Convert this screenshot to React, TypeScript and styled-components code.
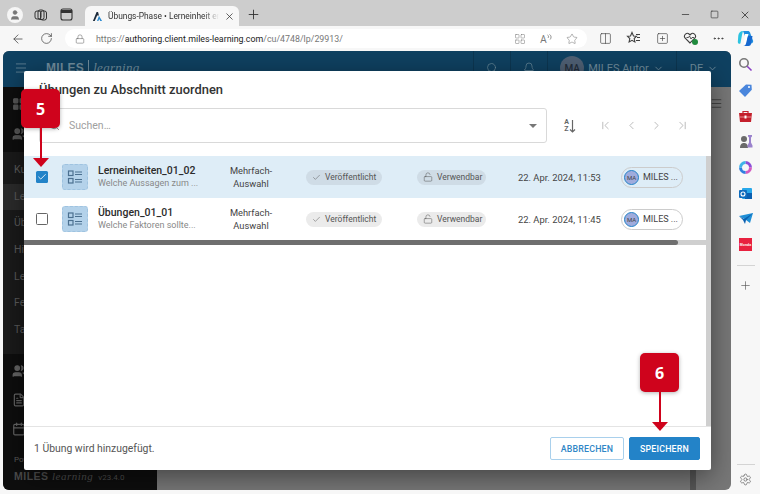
import styled, { createGlobalStyle } from 'styled-components'
import {
  ArrowLeft, RotateCw, Lock, Plus, X, Minus, Square, MoreHorizontal, Settings, Search, Star,
  Check, LockOpen, ChevronFirst, ChevronLeft, ChevronRight, ChevronLast, ChevronDown, Menu,
  Bell, LayoutGrid, Columns2, SquarePlus, User, Users, FileText, Calendar,
} from 'lucide-react'

const GlobalStyle = createGlobalStyle`
  html, body { margin: 0; width: 760px; height: 494px; overflow: hidden; background: #f7f7f7; }
  * { box-sizing: border-box; }
  body { font-family: Roboto, "Liberation Sans", sans-serif; }
`

const Shell = styled.div`
  position: relative;
  width: 760px;
  height: 494px;
  display: flex;
  flex-direction: column;
  overflow: hidden;
  background: #f7f7f7;
`

/* browser chrome */
const TabStrip = styled.div`
  height: 26px;
  flex: none;
  display: flex;
  align-items: flex-end;
  background: #cdcdcd;
  color: #2e2e2e;
`
const StripIcon = styled.div<{ $w: number }>`
  width: ${p => p.$w}px;
  height: 26px;
  padding-top: 3px;
  display: flex;
  align-items: center;
  justify-content: center;
  flex: none;
`
const Profile = styled.div`
  width: 16px;
  height: 16px;
  border-radius: 50%;
  background: #f5f5f5;
  color: #777;
  display: flex;
  align-items: center;
  justify-content: center;
`
const Tab = styled.div`
  width: 154px;
  height: 20px;
  flex: none;
  margin-left: 4px;
  padding: 0 4px 0 7px;
  display: flex;
  align-items: center;
  gap: 5px;
  background: #f7f7f7;
  border-radius: 6px 6px 0 0;
  svg { flex: none; }
`
const TabTitle = styled.span`
  flex: 1;
  min-width: 0;
  font: 8.4px Roboto, sans-serif;
  color: #333;
  white-space: nowrap;
  -webkit-mask-image: linear-gradient(to right, #000 86%, transparent);
  mask-image: linear-gradient(to right, #000 86%, transparent);
`
const StripSpacer = styled.div`
  flex: 1;
`
const Toolbar = styled.div`
  height: 25px;
  flex: none;
  display: flex;
  align-items: center;
  padding-left: 8px;
  color: #444;
`
const NavButton = styled.div<{ $w: number }>`
  width: ${p => p.$w}px;
  flex: none;
  display: flex;
  align-items: center;
  justify-content: center;
  position: relative;
  color: #404040;
`
const AddressBar = styled.div`
  width: 522px;
  height: 19px;
  flex: none;
  margin-right: 4px;
  border-radius: 10px;
  background: #fff;
  display: flex;
  align-items: center;
  padding: 0 2px 0 10px;
  color: #666;
`
const Url = styled.div`
  flex: 1;
  margin-left: 11px;
  font: 8.85px Roboto, sans-serif;
  color: #777;
  white-space: nowrap;
  b { font-weight: 400; color: #222; }
`
const AddressIcon = styled.div`
  width: 26px;
  flex: none;
  display: flex;
  align-items: center;
  justify-content: center;
  color: #777;
  font: 10px "Open Sans", sans-serif;
`

/* body of the window */
const Body = styled.div`
  flex: 1;
  display: flex;
  padding: 0 0 4px 3px;
  min-height: 0;
`
const Page = styled.div`
  width: 728px;
  flex: none;
  display: flex;
  flex-direction: column;
  border-radius: 6px;
  overflow: hidden;
  background: #777;
`
const AppHeader = styled.div`
  height: 36px;
  flex: none;
  display: flex;
  align-items: center;
  padding: 0 0 2px 11px;
  background: #0f4161;
  color: #6f8c9c;
  font-size: 11px;
`
const Logo = styled.div`
  margin-left: 18px;
  display: flex;
  align-items: center;
  gap: 4px;
  flex: 1;
  font: 700 12px "Liberation Sans", sans-serif;
  letter-spacing: .3px;
  i { font: italic 400 13px "Liberation Serif", serif; border-left: 1px solid #6f8c9c; padding-left: 4px; }
`
const HeaderCell = styled.div<{ $w: number }>`
  width: ${p => p.$w}px;
  height: 36px;
  display: flex;
  align-items: center;
  justify-content: center;
  gap: 4px;
  flex: none;
  border-left: 1px solid #0c3651;
  white-space: nowrap;
`
const Avatar = styled.div`
  width: 24px;
  height: 24px;
  border-radius: 50%;
  background: #4f6074;
  color: #222d3a;
  font-size: 10px;
  font-weight: 500;
  display: flex;
  align-items: center;
  justify-content: center;
`
const Main = styled.div`
  flex: 1;
  display: flex;
  min-height: 0;
  position: relative;
`
const Sidebar = styled.div`
  width: 154px;
  flex: none;
  display: flex;
  flex-direction: column;
  background: #0e0e0e;
  color: #5c5c5c;
  font-size: 10.5px;
  white-space: nowrap;
`
const SideIcons = styled.div<{ $gap: number; $bottom: number }>`
  display: flex;
  flex-direction: column;
  gap: ${p => p.$gap}px;
  padding: 10px 0 ${p => p.$bottom}px 9px;
`
const SideMenu = styled.div`
  height: 202px;
  padding-top: 5px;
  background: #1a1a1a;
  flex: none;
`
const SideItem = styled.div<{ $active?: boolean }>`
  height: 26.7px;
  line-height: 26.7px;
  padding-left: 11px;
  background: ${p => (p.$active ? '#2b2b2b' : 'transparent')};
`
const SideFooter = styled.div`
  margin-top: auto;
  padding: 0 0 8px 11px;
  font-size: 8px;
`
const SideBrand = styled.div`
  margin-top: 6px;
  font: 700 10.5px "Liberation Sans", sans-serif;
  letter-spacing: .5px;
  color: #4d4d4d;
  i { font: italic 400 11px "Liberation Serif", serif; }
  span { font: 400 8px Roboto, sans-serif; margin-left: 5px; letter-spacing: 0; }
`
const Content = styled.div`
  flex: 1;
  display: flex;
  justify-content: flex-end;
  padding: 10px 8px 0 0;
  color: #333;
`
const BackScroll = styled.div`
  position: absolute;
  right: 35px;
  bottom: 0;
  width: 6px;
  height: 20px;
  background: #565656;
`
const Rail = styled.div`
  flex: 1;
  display: flex;
  flex-direction: column;
  align-items: center;
  padding-top: 1px;
  color: #555;
`
const RailIcon = styled.div`
  height: 25.7px;
  flex: none;
  display: flex;
  align-items: center;
  justify-content: center;
`
const RailRule = styled.div<{ $top: number; $bottom: number }>`
  width: 18px;
  height: 1px;
  flex: none;
  background: #d4d4d4;
  margin: ${p => p.$top}px 0 ${p => p.$bottom}px;
`
const RedTile = styled.div`
  width: 13px;
  height: 13px;
  background: #e8213f;
  color: #fff;
  font: 700 3.5px "Liberation Sans", sans-serif;
  display: flex;
  align-items: center;
  justify-content: center;
`

/* dialog */
const Modal = styled.div`
  position: absolute;
  left: 21px;
  top: -16px;
  width: 687px;
  height: 399px;
  background: #fff;
  border-radius: 2px;
  box-shadow: 0 6px 26px rgba(0, 0, 0, .45);
  display: flex;
  flex-direction: column;
`
const ModalTitle = styled.div`
  height: 37px;
  flex: none;
  padding: 0 0 0 15px;
  display: flex;
  align-items: center;
  font-size: 12.9px;
  font-weight: 500;
  color: #333;
`
const FilterRow = styled.div`
  height: 48px;
  flex: none;
  display: flex;
  padding-left: 15px;
`
const SearchBox = styled.div`
  width: 508px;
  height: 35px;
  border: 1px solid #d9d9d9;
  border-radius: 3px;
  display: flex;
  align-items: center;
  padding: 0 9px 0 9px;
  color: #888;
  font-size: 10.5px;
  span { flex: 1; margin-left: 9px; color: #a0a0a0; }
`
const Caret = styled.div`
  width: 0;
  height: 0;
  border-left: 4px solid transparent;
  border-right: 4px solid transparent;
  border-top: 4px solid #777;
`
const SortIcon = styled.div`
  width: 46px;
  height: 35px;
  flex: none;
  display: flex;
  align-items: center;
  justify-content: center;
  color: #666;
`
const SortLetters = styled.div`
  display: flex;
  flex-direction: column;
  font-size: 7px;
  font-weight: 700;
  line-height: 7px;
`
const Pager = styled.div`
  height: 35px;
  display: flex;
  align-items: center;
  color: #a8a8a8;
`
const PagerIcon = styled.div`
  width: 25.6px;
  display: flex;
  justify-content: center;
`
const ListArea = styled.div`
  flex: 1;
  display: flex;
  min-height: 0;
`
const ListColumn = styled.div`
  width: 682px;
  flex: none;
`
const VScroll = styled.div`
  width: 5px;
  flex: none;
  background: #cfcfcf;
`
const Row = styled.div<{ $selected?: boolean }>`
  height: 42px;
  display: grid;
  grid-template-columns: 38px 36px 118px 70px 131px 101px 103px 85px;
  align-items: center;
  background: ${p => (p.$selected ? '#deedf7' : '#fff')};
`
const CheckBox = styled.div<{ $checked?: boolean }>`
  width: 12px;
  height: 12px;
  margin-left: 11.5px;
  border-radius: 1.5px;
  border: ${p => (p.$checked ? 'none' : '1.5px solid #666')};
  background: ${p => (p.$checked ? '#2383c8' : '#fff')};
  color: #fff;
  display: flex;
  align-items: center;
  justify-content: center;
`
const TypeTile = styled.div`
  width: 26px;
  height: 26px;
  border-radius: 3px;
  background: #b4d2ea;
  border: 1px dashed #9fc3e0;
  color: #4b7090;
  display: flex;
  align-items: center;
  justify-content: center;
`
const NameCell = styled.div`
  min-width: 0;
  white-space: nowrap;
`
const ItemName = styled.div`
  font-size: 10.5px;
  font-weight: 500;
  line-height: 13px;
  color: #2c2c2c;
`
const ItemText = styled.div`
  font-size: 9px;
  line-height: 13px;
  color: #888;
`
const TypeCell = styled.div`
  font-size: 9.3px;
  line-height: 13px;
  text-align: center;
  color: #444;
`
const Chip = styled.div<{ $selected?: boolean; $w: number }>`
  width: ${p => p.$w}px;
  height: 15px;
  border-radius: 8px;
  background: ${p => (p.$selected ? '#cfdce6' : '#ebebeb')};
  color: #555;
  font-size: 8.5px;
  display: flex;
  align-items: center;
  gap: 4px;
  padding-left: 6px;
  white-space: nowrap;
`
const StatusCell = styled.div`
  padding-left: 20px;
`
const DateCell = styled.div`
  font-size: 9.4px;
  color: #444;
  white-space: nowrap;
`
const UserChip = styled.div`
  width: 62px;
  height: 21px;
  border: 1px solid #ccc;
  border-radius: 11px;
  display: flex;
  align-items: center;
  gap: 4px;
  padding-left: 2px;
  font-size: 9px;
  color: #444;
  white-space: nowrap;
`
const UserDot = styled.div`
  width: 15px;
  height: 15px;
  border-radius: 50%;
  background: #9fabdc;
  border: 1.5px solid #2383c8;
  color: #444;
  font-size: 6px;
  display: flex;
  align-items: center;
  justify-content: center;
`
const HTrack = styled.div`
  height: 5px;
  background: #cfcfcf;
`
const HThumb = styled.div`
  width: 654px;
  height: 5px;
  border-radius: 0 3px 3px 0;
  background: #6f6f6f;
`
const ModalFooter = styled.div`
  height: 44px;
  flex: none;
  border-top: 1px solid #e4e4e4;
  display: flex;
  align-items: center;
  gap: 5px;
  padding: 0 11px 0 10px;
`
const FooterText = styled.div`
  flex: 1;
  font-size: 10.4px;
  color: #555;
`
const Button = styled.button<{ $primary?: boolean }>`
  height: 23px;
  padding: 0;
  width: ${p => (p.$primary ? 71 : 74)}px;
  border-radius: 2px;
  border: 1px solid ${p => (p.$primary ? '#2383c8' : '#a9d0ec')};
  background: ${p => (p.$primary ? '#2383c8' : '#fff')};
  color: ${p => (p.$primary ? '#fff' : '#2f86c6')};
  font: 500 8.8px Roboto, sans-serif;
  letter-spacing: .2px;
`

/* numbered callouts of the manual */
const Callout = styled.div<{ $x: number; $y: number }>`
  position: absolute;
  left: ${p => p.$x}px;
  top: ${p => p.$y}px;
  width: 39px;
  display: flex;
  flex-direction: column;
  align-items: center;
`
const CalloutBadge = styled.div`
  width: 39px;
  height: 39px;
  border-radius: 5px;
  background: #cf031c;
  color: #fff;
  font: 700 16px "Open Sans", sans-serif;
  box-shadow: 0 1px 4px rgba(0, 0, 0, .3);
  display: flex;
  align-items: center;
  justify-content: center;
`
const CalloutLine = styled.div`
  width: 2px;
  height: 30px;
  background: #cf031c;
`
const CalloutHead = styled.div`
  width: 0;
  height: 0;
  border-left: 8.5px solid transparent;
  border-right: 8.5px solid transparent;
  border-top: 9px solid #cf031c;
`

const TypeIcon = () => (
  <svg width="16" height="16" viewBox="0 0 16 16" fill="none" stroke="currentColor" strokeWidth="1.2">
    <rect x="1.5" y="2" width="4.5" height="4.5" />
    <rect x="1.5" y="9.5" width="4.5" height="4.5" />
    <path d="M8 3h7M8 5.5h7M8 10.5h7M8 13h7" />
  </svg>
)

const FavIcon = () => (
  <svg width="11" height="11" viewBox="0 0 12 12">
    <path d="M1 11 5 1h1.6l1 4-2 0L3 11z" fill="#1b2a3a" />
    <path d="M5.5 11 7.6 5.2 11 11H9L7.8 8.6 7 11z" fill="#2b8ad0" />
  </svg>
)

const Copilot = () => (
  <svg width="17" height="17" viewBox="0 0 17 17">
    <path d="M6 1h5c1 0 1.6.6 2 1.6l3 8c.5 1.6-.5 3-2 3h-3z" fill="#1f8fe0" />
    <path d="M1.3 5.5C1.6 3 3.5 1 6 1l-1 4-1.500 8c-.3 1.500-2.500 1-2.700-1z" fill="#2cc3e0" />
    <path d="M8 4h3.500l-2.500 9.500c-.4 1.800-1.500 2.500-3 2.500H4.500c2 0 2.300-1.500 2.500-2.500z" fill="#fff" />
    <path d="M11 6h4.500L14 14c-.3 1-1 2-2.500 2H6c2 0 2.600-1 3-2.500z" fill="#1668cf" />
  </svg>
)

const FavoritesIcon = () => (
  <svg width="15" height="15" viewBox="0 0 15 15" fill="none" stroke="#404040" strokeWidth="1.1">
    <path d="M6 1.500 7.500 5l3 .3-2.300 2.200.7 3.500L6 9.300 3.100 11l.7-3.500L1.500 5.300l3-.3z" />
    <path d="M10 3.500h4M11 6.500h3M10 9.500h4" />
  </svg>
)

const HeartPulse = () => (
  <svg width="16" height="15" viewBox="0 0 16 15" fill="none">
    <path d="M7 12 2 7c-2-3 2-6 4-4l1 1 1-1c2-2 6 1 4 4z" stroke="#404040" strokeWidth="1.100" />
    <path d="M3.500 6.500h2l1-1.500 1.500 3 1-1.500h2" stroke="#404040" strokeWidth=".9" />
    <circle cx="12" cy="11" r="3" fill="#1f8a3d" />
  </svg>
)

const ReadAloudWaves = () => (
  <svg width="5" height="9" viewBox="0 0 5 9" fill="none" stroke="#777" strokeWidth=".8">
    <path d="M.5 1c1.300.6 1.300 2 .5 3M2.500.5c2 1 2 3.500.6 5" />
  </svg>
)

const WorkspaceIcon = () => (
  <svg width="14" height="14" viewBox="0 0 14 14" fill="none" stroke="#333" strokeWidth="1">
    <rect x="1" y="3" width="6" height="8" rx="2" />
    <rect x="4" y="2" width="6" height="9.500" rx="2" />
    <rect x="6.500" y="3" width="6" height="9" rx="2" />
  </svg>
)

const TabActionsIcon = () => (
  <svg width="13" height="13" viewBox="0 0 13 13" fill="none" stroke="#333" strokeWidth="1.100">
    <rect x="1" y="1" width="11" height="11" rx="2" />
    <path d="M1.500 2.500h10v2h-10z" fill="#333" />
  </svg>
)

const RailSearch = () => (
  <svg width="15" height="15" viewBox="0 0 15 15" fill="none" strokeWidth="1.600">
    <circle cx="6" cy="6" r="4.200" stroke="#777" />
    <path d="M9.200 9.200 13.500 13.500" stroke="#8a3fc4" />
  </svg>
)
const RailTag = () => (
  <svg width="15" height="15" viewBox="0 0 15 15">
    <path d="M1 8 8 1.500l5.500.2.300 5L7 14z" fill="#4a86dc" />
    <circle cx="11" cy="4" r="1" fill="#fff" />
  </svg>
)
const RailBox = () => (
  <svg width="15" height="15" viewBox="0 0 15 15">
    <path d="M5 4V2.500h5V4" fill="none" stroke="#c4202c" strokeWidth="1.200" />
    <path d="M1 4h13l-1 9H2z" fill="#c4202c" />
    <path d="M1.500 8h12" stroke="#f4c0c0" strokeWidth=".7" />
    <rect x="6.500" y="6.500" width="2" height="3" fill="#fff" />
  </svg>
)
const RailChess = () => (
  <svg width="16" height="15" viewBox="0 0 16 15">
    <circle cx="6" cy="5" r="3" fill="#6a6a6a" />
    <path d="M2 14c0-4 2-5 4-5s4 1 4 5z" fill="#6a6a6a" />
    <path d="M10 1h4v1.500l-1 1v5l1.500 3v2h-5v-2l1.500-3v-5l-1-1z" fill="#9a82cc" />
  </svg>
)
const RailRing = () => (
  <svg width="15" height="15" viewBox="0 0 15 15" fill="none" strokeWidth="3">
    <path d="M7.500 2.500a5 5 0 0 1 5 5" stroke="#8c4fd8" />
    <path d="M12.500 7.500a5 5 0 0 1-5 5" stroke="#d35ac0" />
    <path d="M7.500 12.500a5 5 0 0 1-5-5" stroke="#2f7ee0" />
    <path d="M2.500 7.500a5 5 0 0 1 5-5" stroke="#3fb4e8" />
  </svg>
)
const RailOutlook = () => (
  <svg width="15" height="15" viewBox="0 0 15 15">
    <rect x="4" y="2" width="10" height="11" rx="1" fill="#28a8ea" />
    <rect x="7" y="7" width="7" height="6" fill="#0a5fb0" />
    <rect x="1" y="4" width="8" height="8" rx="1" fill="#0f6cbd" />
    <circle cx="5" cy="8" r="2" fill="none" stroke="#fff" strokeWidth="1.100" />
  </svg>
)
const RailPlane = () => (
  <svg width="16" height="15" viewBox="0 0 16 15">
    <path d="M1 5 15 2l-3 10-4-3z" fill="#1f8fd6" />
    <path d="M1 5l5 3 9-6-7 7-1 4-2-4z" fill="#0a5fb0" />
  </svg>
)

type Exercise = { name: string; text: string; date: string; selected?: boolean }

const exercises: Exercise[] = [
  { name: 'Lerneinheiten_01_02', text: 'Welche Aussagen zum ...', date: '22. Apr. 2024, 11:53', selected: true },
  { name: 'Übungen_01_01', text: 'Welche Faktoren sollte...', date: '22. Apr. 2024, 11:45' },
]

const sideItems = ['Kurse', 'Lerneinheiten', 'Übungen', 'Hinweise', 'Lernziele', 'Feedback', 'Tags']

const App = () => (
  <Shell>
    <GlobalStyle />
    <TabStrip>
      <StripIcon $w={30}><Profile><User size={12} fill="#777" strokeWidth={1} /></Profile></StripIcon>
      <StripIcon $w={22}><WorkspaceIcon /></StripIcon>
      <StripIcon $w={29}><TabActionsIcon /></StripIcon>
      <Tab>
        <FavIcon />
        <TabTitle>Übungs-Phase • Lerneinheit erst</TabTitle>
        <X size={11} strokeWidth={1.6} />
      </Tab>
      <StripIcon $w={28}><Plus size={15} strokeWidth={1.4} /></StripIcon>
      <StripSpacer />
      <StripIcon $w={29}><Minus size={11} strokeWidth={1.6} /></StripIcon>
      <StripIcon $w={29}><Square size={9} strokeWidth={1.6} /></StripIcon>
      <StripIcon $w={31}><X size={12} strokeWidth={1.6} /></StripIcon>
    </TabStrip>
    <Toolbar>
      <NavButton $w={20}><ArrowLeft size={14} strokeWidth={1.3} /></NavButton>
      <NavButton $w={37}><RotateCw size={13} strokeWidth={1.3} /></NavButton>
      <AddressBar>
        <Lock size={10} strokeWidth={1.3} />
        <Url>https://<b>authoring.client.miles-learning.com</b>/cu/4748/lp/29913/</Url>
        <AddressIcon><LayoutGrid size={12} strokeWidth={1} /></AddressIcon>
        <AddressIcon>A<ReadAloudWaves /></AddressIcon>
        <AddressIcon><Star size={12} strokeWidth={1.1} /></AddressIcon>
      </AddressBar>
      <NavButton $w={28}><Columns2 size={13} strokeWidth={1.2} /></NavButton>
      <NavButton $w={29}><FavoritesIcon /></NavButton>
      <NavButton $w={28}><SquarePlus size={13} strokeWidth={1.2} /></NavButton>
      <NavButton $w={29}><HeartPulse /></NavButton>
      <NavButton $w={27}><MoreHorizontal size={13} strokeWidth={1.8} /></NavButton>
      <NavButton $w={27}><Copilot /></NavButton>
    </Toolbar>
    <Body>
      <Page>
        <AppHeader>
          <Menu size={14} strokeWidth={1.3} />
          <Logo>MILES <i>learning</i></Logo>
          <HeaderCell $w={37}><Search size={12} strokeWidth={1.4} /></HeaderCell>
          <HeaderCell $w={37}><Bell size={12} strokeWidth={1.4} /></HeaderCell>
          <HeaderCell $w={129}>
            <Avatar>MA</Avatar>MILES Autor<ChevronDown size={11} />
          </HeaderCell>
          <HeaderCell $w={55}>DE<ChevronDown size={11} /></HeaderCell>
        </AppHeader>
        <Main>
          <Sidebar>
            <SideIcons $gap={16} $bottom={11}>
              <LayoutGrid size={14} fill="#555" />
              <Users size={14} fill="#555" />
            </SideIcons>
            <SideMenu>
              {sideItems.map((item, i) => (
                <SideItem key={i} $active={i === 1}>{item}</SideItem>
              ))}
            </SideMenu>
            <SideIcons $gap={15} $bottom={10}>
              <Users size={14} fill="#666" color="#666" />
              <FileText size={14} color="#666" />
              <Calendar size={14} color="#666" />
            </SideIcons>
            <SideFooter>
              Powered by
              <SideBrand>MILES <i>learning</i><span>v23.4.0</span></SideBrand>
            </SideFooter>
          </Sidebar>
          <Content><Menu size={13} strokeWidth={1.4} /></Content>
          <BackScroll />
          <Modal>
            <ModalTitle>Übungen zu Abschnitt zuordnen</ModalTitle>
            <FilterRow>
              <SearchBox>
                <Search size={11} />
                <span>Suchen…</span>
                <Caret />
              </SearchBox>
              <SortIcon>
                <SortLetters><span>A</span><span>Z</span></SortLetters>
                <svg width="7" height="14" viewBox="0 0 7 14" fill="none" stroke="currentColor" strokeWidth="1.200">
                  <path d="M3.500 1v12M1 10.500 3.500 13 6 10.500" />
                </svg>
              </SortIcon>
              <Pager>
                <PagerIcon><ChevronFirst size={13} strokeWidth={1.4} /></PagerIcon>
                <PagerIcon><ChevronLeft size={13} strokeWidth={1.4} /></PagerIcon>
                <PagerIcon><ChevronRight size={13} strokeWidth={1.4} /></PagerIcon>
                <PagerIcon><ChevronLast size={13} strokeWidth={1.4} /></PagerIcon>
              </Pager>
            </FilterRow>
            <ListArea>
              <ListColumn>
                {exercises.map(ex => (
                  <Row key={ex.name} $selected={ex.selected}>
                    <CheckBox $checked={ex.selected}>
                      {ex.selected && <Check size={10} strokeWidth={2} />}
                    </CheckBox>
                    <TypeTile><TypeIcon /></TypeTile>
                    <NameCell>
                      <ItemName>{ex.name}</ItemName>
                      <ItemText>{ex.text}</ItemText>
                    </NameCell>
                    <TypeCell>Mehrfach-<br />Auswahl</TypeCell>
                    <StatusCell>
                      <Chip $w={76} $selected={ex.selected}>
                        <Check size={9} strokeWidth={1.3} />Veröffentlicht
                      </Chip>
                    </StatusCell>
                    <Chip $w={69} $selected={ex.selected}>
                      <LockOpen size={10} strokeWidth={1.2} />Verwendbar
                    </Chip>
                    <DateCell>{ex.date}</DateCell>
                    <UserChip>
                      <UserDot>MA</UserDot>MILES ...
                    </UserChip>
                  </Row>
                ))}
                <HTrack><HThumb /></HTrack>
              </ListColumn>
              <VScroll />
            </ListArea>
            <ModalFooter>
              <FooterText>1 Übung wird hinzugefügt.</FooterText>
              <Button>ABBRECHEN</Button>
              <Button $primary>SPEICHERN</Button>
            </ModalFooter>
          </Modal>
        </Main>
      </Page>
      <Rail>
        <RailIcon><RailSearch /></RailIcon>
        <RailIcon><RailTag /></RailIcon>
        <RailIcon><RailBox /></RailIcon>
        <RailIcon><RailChess /></RailIcon>
        <RailIcon><RailRing /></RailIcon>
        <RailIcon><RailOutlook /></RailIcon>
        <RailIcon><RailPlane /></RailIcon>
        <RailIcon><RedTile>Monda</RedTile></RailIcon>
        <RailRule $top={7} $bottom={7} />
        <RailIcon><Plus size={13} strokeWidth={1.2} /></RailIcon>
        <RailRule $top={166} $bottom={1} />
        <RailIcon><Settings size={13} strokeWidth={1.2} /></RailIcon>
      </Rail>
    </Body>
    <Callout $x={21} $y={89}>
      <CalloutBadge>5</CalloutBadge>
      <CalloutLine />
      <CalloutHead />
    </Callout>
    <Callout $x={640} $y={353}>
      <CalloutBadge>6</CalloutBadge>
      <CalloutLine />
      <CalloutHead />
    </Callout>
  </Shell>
)

export default App
